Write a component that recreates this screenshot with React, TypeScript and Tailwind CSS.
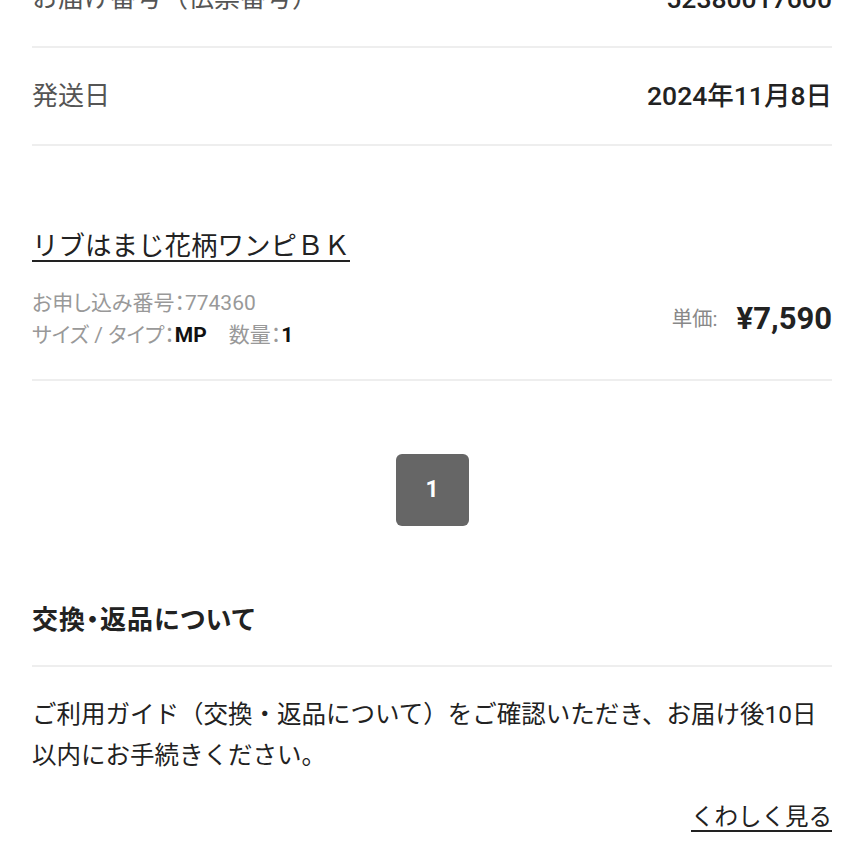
import React from "react";

export default function App() {
  const font = { fontFamily: 'Roboto, "Noto Sans CJK JP", sans-serif' };
  const palt = { fontFeatureSettings: '"palt"' };
  return (
    <div className="w-[864px] h-[864px] overflow-hidden bg-white" style={font}>
      <div className="px-8 mt-[-49px]">
        <div className="flex items-center justify-between h-[97px] border-b-2 border-[#eeeeee]">
          <span className="text-[26px] text-[#555555]">お届け番号（伝票番号）</span>
          <span className="text-[26.5px] font-medium text-[#222222]">52380017600</span>
        </div>
        <div className="flex items-center justify-between h-[98px] border-b-2 border-[#eeeeee]">
          <span className="text-[26px] text-[#555555]">発送日</span>
          <span className="text-[26.5px] font-medium text-[#222222]">2024年11月8日</span>
        </div>

        <div className="pt-[80px] pb-[28px] border-b-2 border-[#eeeeee]">
          <div className="text-[26.5px] leading-[39px] text-[#222222] underline decoration-2 underline-offset-[5px]">
            リブはまじ花柄ワンピＢＫ
          </div>
          <div className="mt-[22px] flex items-center justify-between">
            <div className="text-[21px] leading-[32px] text-[#999999]" style={palt}>
              <div>お申し込み番号：774360</div>
              <div>
                サイズ / タイプ：<span className="font-bold text-[#111111]">MP</span>
                <span className="ml-[22px]">数量：</span>
                <span className="font-bold text-[#111111]">1</span>
              </div>
            </div>
            <div className="flex items-center">
              <span className="text-[20.5px] text-[#888888] mr-[19px]">単価:</span>
              <span className="text-[31px] font-bold text-[#222222]">¥7,590</span>
            </div>
          </div>
        </div>

        <div className="flex justify-center pt-[73px]">
          <div className="w-[73px] h-[72px] rounded-[6px] bg-[#666666] flex items-center justify-center text-white text-[23px] font-bold">
            1
          </div>
        </div>

        <div
          className="pt-[75px] pb-[25px] border-b-2 border-[#eeeeee] text-[26px] leading-[39px] font-bold tracking-[1px] text-[#222222]"
          style={palt}
        >
          交換・返品について
        </div>

        <div className="pt-[27px] text-[24.5px] leading-[41px] text-[#222222] whitespace-nowrap">
          ご利用ガイド（交換・返品について）をご確認いただき、お届け後10日
          <br />
          以内にお手続きください。
        </div>

        <div className="flex justify-end pt-[23px]">
          <span className="text-[23.5px] leading-[36px] text-[#222222] underline decoration-2 underline-offset-[5px]">
            くわしく見る
          </span>
        </div>
      </div>
    </div>
  );
}
